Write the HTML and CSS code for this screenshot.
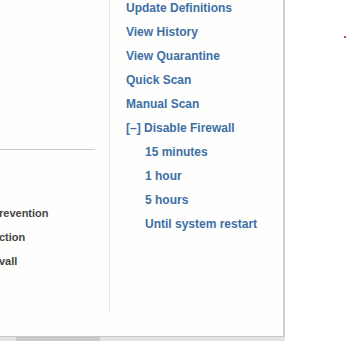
FILE: index.html
```html
<!DOCTYPE html>
<html>
<head>
<meta charset="utf-8">
<link rel="stylesheet" href="styles.css">
</head>
<body>
<div class="page">
  <div class="frame">
    <div class="side">
      <div class="rule"></div>
      <ul class="side-list">
        <li>revention</li>
        <li>ction</li>
        <li>vall</li>
      </ul>
    </div>
    <ul class="menu">
      <li>Update Definitions</li>
      <li>View History</li>
      <li>View Quarantine</li>
      <li>Quick Scan</li>
      <li>Manual Scan</li>
      <li>[–] Disable Firewall</li>
      <li class="sub">15 minutes</li>
      <li class="sub">1 hour</li>
      <li class="sub">5 hours</li>
      <li class="sub">Until system restart</li>
    </ul>
  </div>
  <div class="scroll"><div class="thumb"></div></div>
  <span class="mark"></span>
</div>
</body>
</html>
```
FILE: styles.css
```css
html, body {
  margin: 0;
  padding: 0;
  background: #ffffff;
}
body {
  width: 346px;
  height: 341px;
  overflow: hidden;
  font-family: "Liberation Sans", Arial, sans-serif;
  font-weight: bold;
  font-size: 12px;
}
.page {
  position: relative;
  width: 346px;
  height: 341px;
}
.frame {
  width: 283px;
  height: 336px;
  border-right: 2px solid #cfcfcb;
  border-bottom: 1px solid #c6c6c6;
  background: #fefefc;
  display: flex;
}
.side {
  width: 110px;
  height: 312px;
  border-right: 1px solid #e6e6e6;
  overflow: hidden;
  box-sizing: border-box;
  padding-top: 149px;
}
.rule {
  width: 95px;
  height: 1px;
  background: #cccccc;
}
.side-list {
  list-style: none;
  margin: 56px 0 0 -1px;
  padding: 0;
  color: #454545;
  font-size: 11px;
}
.side-list li {
  height: 24px;
  line-height: 14px;
}
.menu {
  list-style: none;
  margin: 0;
  padding: 1px 0 0 16px;
  color: #3d6fa6;
}
.menu li {
  height: 24px;
  line-height: 14px;
  white-space: nowrap;
}
.menu li.sub {
  padding-left: 19px;
}
.scroll {
  height: 4px;
  width: 285px;
  background: #e4e4e2;
  display: flex;
}
.thumb {
  margin-left: 16px;
  width: 84px;
  background: #c9c9c9;
}
.mark {
  position: absolute;
  left: 344px;
  top: 36px;
  width: 2px;
  height: 2px;
  background: #d04a3a;
}
```
